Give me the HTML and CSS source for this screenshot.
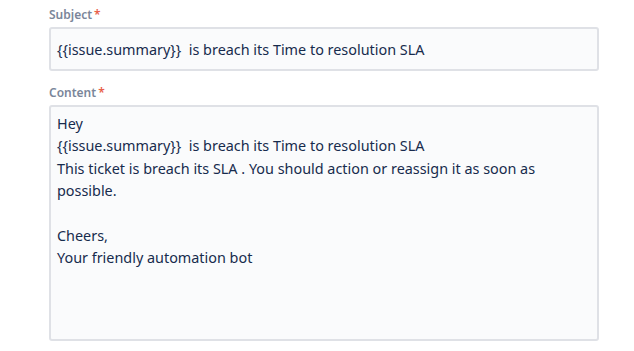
FILE: index.html
```html
<!DOCTYPE html>
<html lang="en">
  <head>
    <meta charset="UTF-8" />
    <title>Email content</title>
    <link rel="stylesheet" href="styles.css">
  </head>
  <body>
    <div class="form">
      <div class="field">
        <label class="field-label">Subject<span class="required">*</span></label>
        <div class="input">{{issue.summary}}  is breach its Time to resolution SLA</div>
      </div>
      <div class="field">
        <label class="field-label">Content<span class="required">*</span></label>
        <div class="input textarea">Hey
{{issue.summary}}  is breach its Time to resolution SLA
This ticket is breach its SLA . You should action or reassign it as soon as possible.

Cheers,
Your friendly automation bot</div>
      </div>
    </div>
  </body>
</html>
```

FILE: styles.css
```css
body {
  margin: 0;
  padding: 0;
  background: #fff;
  font-family: "Noto Sans", "Open Sans", sans-serif;
  color: #172b4d;
}
.form {
  width: 550px;
  padding: 7px 0 0 49px;
}
.field {
  margin-bottom: 14px;
}
.field-label {
  display: block;
  font-size: 12px;
  font-weight: 600;
  color: #7a869a;
  line-height: 16px;
  margin-bottom: 4px;
}
.required {
  color: #e8604a;
  margin-left: 2px;
}
.input {
  background: #fafbfc;
  border: 2px solid #dfe1e6;
  border-radius: 3px;
  padding: 11px 6px 10px;
  font-size: 14.4px;
  line-height: 19px;
  white-space: pre-wrap;
}
.textarea {
  height: 222px;
  padding: 6px 6px 4px;
  line-height: 22.33px;
}
```
